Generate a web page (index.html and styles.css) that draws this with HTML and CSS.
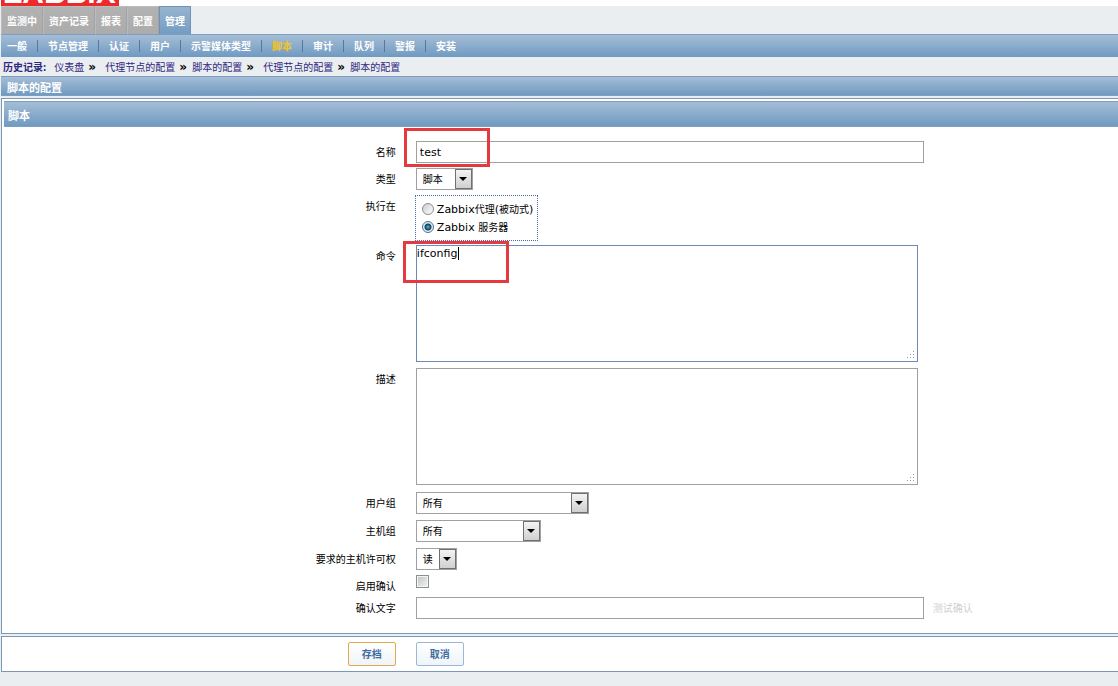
FILE: index.html
```html
<!DOCTYPE html>
<html lang="zh-CN">
<head>
<meta charset="utf-8">
<title>脚本的配置</title>
<link rel="stylesheet" href="styles.css">
</head>
<body>
<header class="top"><div class="logo"><span class="logo-text">ZABBIX</span></div></header>
<nav class="tabs">
  <a class="tab" href="#">监测中</a>
  <a class="tab" href="#">资产记录</a>
  <a class="tab" href="#">报表</a>
  <a class="tab" href="#">配置</a>
  <a class="tab tab-active" href="#">管理</a>
</nav>
<nav class="submenu">
  <a class="sub" href="#">一般</a>
  <a class="sub" href="#">节点管理</a>
  <a class="sub" href="#">认证</a>
  <a class="sub" href="#">用户</a>
  <a class="sub" href="#">示警媒体类型</a>
  <a class="sub sub-active" href="#">脚本</a>
  <a class="sub" href="#">审计</a>
  <a class="sub" href="#">队列</a>
  <a class="sub" href="#">警报</a>
  <a class="sub" href="#">安装</a>
</nav>
<div class="history">
  <b class="history-title">历史记录:</b>
  <a href="#">仪表盘</a><span class="sep sep-wide">»</span>
  <a href="#">代理节点的配置</a><span class="sep">»</span>
  <a href="#">脚本的配置</a><span class="sep sep-wide">»</span>
  <a href="#">代理节点的配置</a><span class="sep">»</span>
  <a href="#">脚本的配置</a>
</div>
<h1 class="page-title">脚本的配置</h1>
<form>
  <section class="panel">
    <h2 class="panel-title">脚本</h2>
    <div class="rows">
      <div class="row">
        <label class="label" for="name">名称</label>
        <div class="field"><input class="text" id="name" type="text" value="test"><span class="mark mark-name"></span></div>
      </div>
      <div class="row">
        <label class="label" for="type">类型</label>
        <div class="field"><select class="select select-type" id="type"><option>脚本</option></select></div>
      </div>
      <div class="row">
        <span class="label" id="exec">执行在</span>
        <div class="radios" role="radiogroup" aria-labelledby="exec">
          <label class="choice"><input class="radio" type="radio" name="exec"><span><span class="latin">Zabbix</span>代理<span class="latin">(</span>被动式<span class="latin">)</span></span></label>
          <label class="choice"><input class="radio" type="radio" name="exec" checked><span><span class="latin">Zabbix </span>服务器</span></label>
        </div>
      </div>
      <div class="row row-loose">
        <label class="label" for="command">命令</label>
        <div class="field"><textarea class="area area-focus" id="command">ifconfig</textarea><span class="caret"></span><span class="mark mark-command"></span></div>
      </div>
      <div class="row row-last-area">
        <label class="label" for="description">描述</label>
        <div class="field"><textarea class="area" id="description"></textarea></div>
      </div>
      <div class="row row-loose">
        <label class="label" for="usergroup">用户组</label>
        <div class="field"><select class="select select-user" id="usergroup"><option>所有</option></select></div>
      </div>
      <div class="row row-loose">
        <label class="label" for="hostgroup">主机组</label>
        <div class="field"><select class="select select-host" id="hostgroup"><option>所有</option></select></div>
      </div>
      <div class="row">
        <label class="label" for="access">要求的主机许可权</label>
        <div class="field"><select class="select select-access" id="access"><option>读</option></select></div>
      </div>
      <div class="row row-tight">
        <label class="label" for="confirm">启用确认</label>
        <div class="field"><input class="check" id="confirm" type="checkbox"></div>
      </div>
      <div class="row row-tight">
        <label class="label" for="confirmation">确认文字</label>
        <div class="field"><input class="text" id="confirmation" type="text"><button class="test" type="button" disabled>测试确认</button></div>
      </div>
    </div>
  </section>
  <footer class="panel actions">
    <div class="action-main"><button class="button button-main" type="submit">存档</button></div>
    <button class="button" type="button">取消</button>
  </footer>
</form>
</body>
</html>
```
FILE: styles.css
```css
* { box-sizing: border-box; }
body {
  margin: 0;
  background: #ebeef1;
  color: #000;
  font: 10px/20px "Noto Sans CJK SC", sans-serif;
  overflow-x: hidden;
}
input, select, textarea, button { margin: 0; font: inherit; color: inherit; }
a { color: #2f2880; text-decoration: none; }

.top { height: 6px; background: #fff; padding-left: 1px; }
.logo {
  display: flex;
  align-items: flex-end;
  width: 118px;
  height: 6px;
  padding-left: 3px;
  overflow: hidden;
  background: #ec2a2c;
}
.logo-text { color: #fff; font: bold 30px/26px "Liberation Sans", sans-serif; }

.tabs { display: flex; padding-left: 1px; height: 28px; }
.tab {
  border: 1px solid #bcbcbc;
  border-right-color: #a2a2a2;
  border-bottom: 0;
  padding: 0 5px;
  background: linear-gradient(#b2b2b2, #acacac);
  color: #fff;
  font-weight: bold;
  line-height: 27px;
}
.tab-active { background: linear-gradient(#98b4d0, #739dc3); border-color: #6f93b5; }

.submenu {
  display: flex;
  align-items: center;
  height: 23px;
  margin-left: 1px;
  padding-left: 6px;
  border-top: 1px solid #7d9fbf;
  background: linear-gradient(#a5bdd6, #709ac1);
}
.sub { color: #fff; font-weight: bold; line-height: 12px; padding-right: 10px; margin-right: 10px; border-right: 1px solid #58799d; }
.sub:last-child { border-right: 0; }
.sub-active { color: #f5c518; }

.history { display: flex; height: 19px; padding-left: 3px; line-height: 20px; }
.history-title { color: #2f2880; margin-right: 8px; }
.sep { width: 17px; padding-left: 4px; font: bold 12px/20px "DejaVu Sans", sans-serif; }
.sep-wide { width: 21px; }

.page-title, .panel-title {
  margin: 0;
  color: #fff;
  font-size: 11px;
  font-weight: bold;
  background: linear-gradient(#a5bdd6, #709ac1);
}
.page-title { height: 20px; margin-left: 1px; padding-left: 6px; line-height: 20px; border-top: 1px solid #7d9fbf; border-bottom: 1px solid #7d9fbf; }
.panel { margin: 2px 0 0 1px; background: #fff; border: 1px solid #7b98b5; border-right: 0; }
.panel-title { margin: 2px 0 0 2px; height: 26px; padding-left: 4px; line-height: 26px; border: 1px solid #7d9fbf; border-width: 1px 0; }

.rows { padding: 14px 0 14px 5px; }
.row { display: flex; align-items: flex-start; gap: 20px; margin-bottom: 5px; }
.row-loose { margin-bottom: 6px; }
.row-last-area { margin-bottom: 7px; }
.row-tight { margin-bottom: 0; }
.label { flex: 0 0 35%; text-align: right; line-height: 22px; }
.field { position: relative; display: flex; align-items: center; }
.latin { font: 11px/18px "DejaVu Sans", sans-serif; }
.text { width: 508px; height: 22px; padding: 0 3px; border: 1px solid #a0a0a0; border-radius: 0; background: #fff; font: 11px "DejaVu Sans", sans-serif; }
.area {
  display: block;
  width: 502px;
  height: 117px;
  padding: 0;
  border: 1px solid #a0a0a0;
  border-radius: 0;
  background: #fff;
  font: 11px/15px "DejaVu Sans", sans-serif;
  outline: 0;
}
.area::-webkit-resizer {
  background: url("data:image/svg+xml,%3Csvg xmlns='http://www.w3.org/2000/svg' width='11' height='11' fill='%239a9da6'%3E%3Cpath d='M7 1h1v1h-1zM4 4h1v1h-1zM7 4h1v1h-1zM1 7h1v1h-1zM4 7h1v1h-1zM7 7h1v1h-1z'/%3E%3C/svg%3E") right bottom no-repeat;
}
.area-focus { border-color: #6c89b8; }
.caret { position: absolute; left: 42px; top: 2px; width: 1px; height: 13px; background: #000; }
.mark { position: absolute; border: 3px solid #e43a3f; pointer-events: none; }
.mark-name { left: -12px; top: -13px; width: 86px; height: 39px; }
.mark-command { left: -13px; top: -4px; width: 106px; height: 42px; }
.select {
  appearance: none;
  height: 22px;
  padding: 0 0 0 6px;
  border: 1px solid #a0a0a0;
  border-radius: 0;
  background: #fff url("data:image/svg+xml,%3Csvg xmlns='http://www.w3.org/2000/svg' width='17' height='20'%3E%3Cdefs%3E%3ClinearGradient id='g' x2='0' y2='1'%3E%3Cstop stop-color='%23f4f4f4'/%3E%3Cstop offset='1' stop-color='%23cfcfcf'/%3E%3C/linearGradient%3E%3C/defs%3E%3Crect x='.5' y='.5' width='16' height='19' fill='url(%23g)' stroke='%23707070'/%3E%3Cpath d='M4 8h8l-4 4z'/%3E%3C/svg%3E") right center no-repeat;
}
.select-type { width: 57px; }
.select-user { width: 173px; }
.select-host { width: 125px; }
.select-access { width: 41px; }
.radios { margin-left: -1px; padding: 4px 4px 4px 6px; border: 1px dotted #4b6ca8; height: 46px; }
.radios { margin-bottom: -1px; }
.choice { display: flex; align-items: center; gap: 3px; height: 18px; line-height: 18px; }
.radio {
  appearance: none;
  width: 12px;
  height: 12px;
  border: 1px solid #8e8f8f;
  border-radius: 50%;
  background: linear-gradient(135deg, #c8cbcf, #fff);
}
.radio:checked { border-color: #49728f; background: radial-gradient(circle, #5fb0d6 0, #123c5c 3px, #e4eef5 4px); }
.check { appearance: none; align-self: flex-start; width: 13px; height: 13px; border: 1px solid #8e8f8f; background: linear-gradient(135deg, #bfc2c6, #f4f4f4); box-shadow: inset 0 0 0 1px #f4f4f4; }
.test { border: 0; padding: 0; margin-left: 9px; background: none; color: #d0d0d0; }

.actions { display: flex; align-items: center; gap: 20px; height: 36px; padding-left: 5px; }
.action-main { flex: 0 0 35%; display: flex; justify-content: flex-end; }
.button { width: 48px; height: 24px; padding: 0; border: 1px solid #9db8d6; border-radius: 2px; background: linear-gradient(#fff, #eef4fa); color: #3f6d9f; font-weight: bold; }
.button-main { border-color: #e3a94a; }
```
